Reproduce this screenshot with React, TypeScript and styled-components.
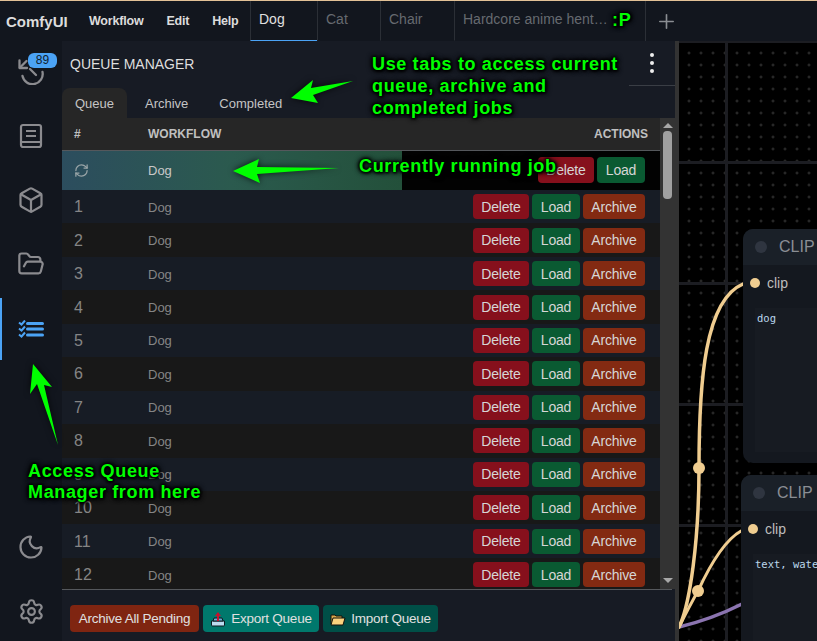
import React from 'react'
import styled, { createGlobalStyle } from 'styled-components'
import { Box, FolderOpen, Moon, Plus, RefreshCw, Settings } from 'lucide-react'

const GlobalStyle = createGlobalStyle`
  html, body {
    margin: 0;
    padding: 0;
    background: #000;
  }
  * {
    box-sizing: border-box;
  }
`

const Page = styled.div`
  position: relative;
  width: 817px;
  height: 641px;
  overflow: hidden;
  display: flex;
  flex-direction: column;
  border-top: 1px solid #e2c196;
  background: #12161e;
  font-family: 'Liberation Sans', Arial, sans-serif;
`
const TopBar = styled.div`
  height: 40px;
  flex: none;
  display: flex;
  align-items: stretch;
  background: #12161e;
  color: #e4e4e4;
`
const Logo = styled.div`
  width: 83px;
  padding-left: 6px;
  display: flex;
  align-items: center;
  font-size: 15px;
  font-weight: 700;
  color: #dcdcdc;
`
const Menu = styled.div`
  width: 167px;
  display: flex;
  align-items: center;
  padding-left: 6px;
  gap: 23px;
`
const MenuItem = styled.span`
  font-size: 12.5px;
  font-weight: 700;
  letter-spacing: -0.2px;
  color: #dcdcdc;
`
const Tab = styled.div<{ $w: number; $active?: boolean }>`
  width: ${(p) => p.$w}px;
  padding: 0 0 4px 8px;
  display: flex;
  align-items: center;
  font-size: 14px;
  color: ${(p) => (p.$active ? '#e0e0e0' : '#666a70')};
  border-left: 1px solid #2b2f36;
  border-bottom: 1px solid ${(p) => (p.$active ? '#4ba3f5' : 'transparent')};
`
const AddTab = styled.div`
  width: 42px;
  display: flex;
  align-items: center;
  justify-content: center;
  color: #8a8d92;
  border-left: 1px solid #2b2f36;
`
const Main = styled.div`
  flex: 1;
  min-height: 0;
  display: flex;
`
const Sidebar = styled.div`
  width: 62px;
  flex: none;
  display: flex;
  flex-direction: column;
  margin-bottom: -2px;
  margin-top: -1px;
  color: #8b8b8f;
`
const SideItem = styled.div<{ $active?: boolean }>`
  position: relative;
  height: ${(p) => (p.$active ? '62px' : '64px')};
  margin-top: ${(p) => (p.$active ? '2px' : '0')};
  flex: none;
  display: flex;
  align-items: center;
  justify-content: center;
  color: ${(p) => (p.$active ? '#4ba3f5' : 'inherit')};
  border-left: 2px solid ${(p) => (p.$active ? '#4ba3f5' : 'transparent')};
  padding-right: 2px;
`
const SideSpacer = styled.div`
  flex: 1;
`
const Badge = styled.span`
  position: absolute;
  left: 26px;
  top: 13px;
  width: 29px;
  height: 15px;
  border-radius: 6px;
  background: #4ba3f5;
  color: #10202e;
  font-size: 12px;
  line-height: 15px;
  text-align: center;
`
const Panel = styled.div`
  width: 613px;
  flex: none;
  display: flex;
  flex-direction: column;
  background: #171b24;
`
const PanelHead = styled.div`
  height: 45px;
  flex: none;
  display: flex;
  align-items: stretch;
  justify-content: space-between;
  padding-left: 8px;
`
const PanelTitle = styled.div`
  display: flex;
  align-items: center;
  font-size: 14px;
  color: #dedede;
`
const Kebab = styled.div`
  width: 46px;
  display: flex;
  flex-direction: column;
  align-items: center;
  justify-content: center;
  gap: 4px;
  border-bottom: 1px solid #3a3e45;
`
const Dot = styled.span`
  width: 4px;
  height: 4px;
  border-radius: 50%;
  background: #eee;
`
const TabStrip = styled.div`
  height: 32px;
  flex: none;
  display: flex;
  align-items: stretch;
  font-size: 13px;
`
const PanelTab = styled.div<{ $active?: boolean }>`
  width: ${(p) => (p.$active ? '65px' : 'auto')};
  padding: ${(p) => (p.$active ? '1px 0 0' : '1px 13px 0 18px')};
  margin-top: 2px;
  display: flex;
  align-items: center;
  justify-content: center;
  border-radius: 8px 8px 0 0;
  color: #c4c4c4;
  background: ${(p) => (p.$active ? '#262626' : 'transparent')};
`
const TableWrap = styled.div`
  flex: 1;
  min-height: 0;
  display: flex;
  background: #181818;
`
const Table = styled.div`
  flex: 1;
  min-width: 0;
  overflow: hidden;
`
const HeadRow = styled.div`
  height: 32px;
  display: grid;
  grid-template-columns: 74px 1fr auto;
  align-items: center;
  padding: 0 12px;
  background: #262626;
  color: #c0c0c0;
  font-size: 12px;
  font-weight: 700;
`
const RunningRow = styled.div`
  position: relative;
  height: 40px;
  display: grid;
  grid-template-columns: 74px 1fr auto;
  align-items: center;
  padding: 0 15px 1px 12px;
  background: #020202;
  border-top: 1px solid #55585c;
`
const Progress = styled.div`
  position: absolute;
  left: 0;
  top: 0;
  bottom: 0;
  background: linear-gradient(90deg, #2c4d5e, #2b5a4e 50%, #23503a);
`
const QueueRow = styled.div<{ $odd: boolean }>`
  height: 33.45px;
  display: grid;
  grid-template-columns: 74px 1fr auto;
  align-items: center;
  padding: 0 15px 0 12px;
  background: ${(p) => (p.$odd ? '#171c25' : '#181818')};
`
const RowNum = styled.div`
  padding-top: 1px;
  font-size: 16px;
  color: #858585;
`
const RowName = styled.div<{ $running?: boolean }>`
  position: relative;
  padding-top: 1px;
  font-size: 13px;
  color: ${(p) => (p.$running ? '#c8c8c8' : '#858585')};
`
const SpinCell = styled.div`
  position: relative;
  display: flex;
  color: #9aa5a8;
`
const Actions = styled.div`
  position: relative;
  display: flex;
  gap: 3px;
`
const ActionButton = styled.div<{ $bg: string; $w: number; $h?: number }>`
  width: ${(p) => p.$w}px;
  height: ${(p) => p.$h ?? 25}px;
  display: flex;
  align-items: center;
  justify-content: center;
  border-radius: 4px;
  background: ${(p) => p.$bg};
  color: #d6d6d6;
  font-size: 14px;
  letter-spacing: -0.2px;
`
const ScrollTrack = styled.div`
  width: 15px;
  flex: none;
  display: flex;
  flex-direction: column;
  align-items: center;
  background: #333;
`
const ArrowUp = styled.div`
  width: 0;
  height: 0;
  margin-top: 5px;
  border-left: 5px solid transparent;
  border-right: 5px solid transparent;
  border-bottom: 5px solid #a8a8a8;
`
const Thumb = styled.div`
  width: 9px;
  height: 68px;
  margin-top: 3px;
  border-radius: 4px;
  background: #a0a0a0;
`
const ArrowDown = styled.div`
  width: 0;
  height: 0;
  margin-top: auto;
  margin-bottom: 6px;
  border-left: 5px solid transparent;
  border-right: 5px solid transparent;
  border-top: 5px solid #a8a8a8;
`
const Footer = styled.div`
  height: 52px;
  flex: none;
  display: flex;
  align-items: flex-start;
  gap: 4px;
  padding: 15px 0 0 8px;
  border-top: 1px solid #55585c;
  margin-right: 3px;
`
const FooterButton = styled.div<{ $bg: string; $w: number }>`
  width: ${(p) => p.$w}px;
  height: 27px;
  display: flex;
  align-items: center;
  justify-content: center;
  gap: 5px;
  border-radius: 4px;
  background: ${(p) => p.$bg};
  color: #e0e0e0;
  font-size: 13.5px;
  letter-spacing: -0.25px;
`
const Splitter = styled.div`
  width: 4px;
  flex: none;
  background: #333;
`
const Canvas = styled.div`
  position: relative;
  flex: 1;
  background: #000;
  overflow: hidden;
`
const CanvasArt = styled.svg`
  position: absolute;
  left: 0;
  top: 0;
  width: 138px;
  height: 600px;
`
const Node = styled.div<{ $x: number; $y: number; $h: number }>`
  position: absolute;
  left: ${(p) => p.$x}px;
  top: ${(p) => p.$y}px;
  width: 200px;
  height: ${(p) => p.$h}px;
  border-radius: 10px;
  background: #14181f;
`
const NodeHead = styled.div`
  height: 36px;
  display: flex;
  align-items: center;
  gap: 12px;
  padding-left: 12px;
  border-radius: 10px 10px 0 0;
  background: #1a2028;
  color: #8a8e94;
  font-size: 16px;
`
const NodeLed = styled.span`
  width: 12px;
  height: 12px;
  border-radius: 50%;
  background: #2f3540;
`
const NodePort = styled.div`
  height: 36px;
  display: flex;
  align-items: center;
  gap: 7px;
  padding-left: 7px;
  color: #bdbdbd;
  font-size: 14px;
`
const PortDot = styled.span`
  width: 10px;
  height: 10px;
  border-radius: 50%;
  background: #f0cd90;
`
const NodeText = styled.div<{ $h: number }>`
  height: ${(p) => p.$h}px;
  margin: 7px 0 0 12px;
  padding: 4px 2px;
  background: #171b22;
  color: #bcd8ec;
  font-family: 'DejaVu Sans Mono', monospace;
  font-size: 10.5px;
`
const Overlay = styled.svg`
  position: absolute;
  left: 0;
  top: 0;
  width: 817px;
  height: 641px;
  pointer-events: none;
  filter: drop-shadow(0 0 3px rgba(0, 0, 0, 0.8));
`
const Note = styled.div<{ $x: number; $y: number; $lh?: number }>`
  position: absolute;
  left: ${(p) => p.$x}px;
  top: ${(p) => p.$y}px;
  font-size: 18px;
  font-weight: 700;
  line-height: ${(p) => p.$lh ?? 22}px;
  letter-spacing: 0.65px;
  white-space: pre;
  color: #00ff00;
  text-shadow: 0 0 2px #000, 0 0 3px #000, 0 0 4px #000, 0 0 5px #000, 0 0 6px #000, 1px 1px 3px #000;
`

const rows = Array.from({ length: 12 }, (_, i) => i + 1)

const HistoryIcon = () => (
  <svg width="26" height="26" viewBox="0 0 26 26" fill="none" stroke="currentColor" strokeWidth="2.3" strokeLinecap="round">
    <path d="M1.500 1.500V9H9" strokeLinejoin="round" />
    <path d="M2 8.500 8.500 2" />
    <path d="M4.500 17A10 10 0 0 0 24.500 13" />
    <path d="M12 10l6 6" />
  </svg>
)
const BookIcon = () => (
  <svg width="24" height="26" viewBox="0 0 24 26" fill="none" stroke="currentColor" strokeWidth="2.2">
    <rect x="2" y="2" width="20" height="22" rx="2" />
    <path d="M2 19h20M7 8h10M7 13h10" />
  </svg>
)
const QueueIcon = () => (
  <svg width="26" height="18" viewBox="0 0 26 18" fill="none" stroke="currentColor">
    <path d="M1 2.500l2.500 2L7 .5M1 8.500l2.500 2 3.500-4M1 14.500l2.500 2 3.500-4" strokeWidth="2" />
    <path d="M9.500 3.500h15M9.500 9h15M9.500 15h15" strokeWidth="3" strokeLinecap="round" />
  </svg>
)
const ExportIcon = () => (
  <svg width="16" height="16" viewBox="0 0 16 16">
    <path d="M1.500 10h13v4a1 1 0 0 1-1 1h-11a1 1 0 0 1-1-1z" fill="#bcdcf0" stroke="#0c1a20" />
    <path d="M3 10l1-3h8l1 3z" fill="#6aa8d0" stroke="#0c1a20" />
    <path d="M8 10V4" stroke="#c8102e" strokeWidth="2" />
    <path d="M5 5l3-4 3 4z" fill="#c8102e" />
  </svg>
)
const FolderIcon = () => (
  <svg width="16" height="14" viewBox="0 0 16 14">
    <path d="M1 12V3h4l1 1h6v2" fill="#d9a94e" stroke="#14120a" />
    <path d="M3 6h12l-2 7H1z" fill="#fbd27e" stroke="#14120a" />
  </svg>
)

export default function App() {
  return (
    <Page>
      <GlobalStyle />
      <TopBar>
        <Logo>ComfyUI</Logo>
        <Menu>
          <MenuItem>Workflow</MenuItem>
          <MenuItem>Edit</MenuItem>
          <MenuItem>Help</MenuItem>
        </Menu>
        <Tab $w={67} $active>Dog</Tab>
        <Tab $w={63}>Cat</Tab>
        <Tab $w={74}>Chair</Tab>
        <Tab $w={191}>Hardcore anime hent…</Tab>
        <AddTab>
          <Plus size={23} strokeWidth={1.7} />
        </AddTab>
      </TopBar>
      <Main>
        <Sidebar>
          <SideItem>
            <HistoryIcon />
            <Badge>89</Badge>
          </SideItem>
          <SideItem><BookIcon /></SideItem>
          <SideItem><Box size={28} strokeWidth={1.9} /></SideItem>
          <SideItem><FolderOpen size={28} strokeWidth={1.9} /></SideItem>
          <SideItem $active><QueueIcon /></SideItem>
          <SideSpacer />
          <SideItem><Moon size={28} strokeWidth={1.9} /></SideItem>
          <SideItem><Settings size={27} strokeWidth={1.9} /></SideItem>
        </Sidebar>
        <Panel>
          <PanelHead>
            <PanelTitle>QUEUE MANAGER</PanelTitle>
            <Kebab>
              <Dot />
              <Dot />
              <Dot />
            </Kebab>
          </PanelHead>
          <TabStrip>
            <PanelTab $active>Queue</PanelTab>
            <PanelTab>Archive</PanelTab>
            <PanelTab>Completed</PanelTab>
          </TabStrip>
          <TableWrap>
            <Table>
              <HeadRow>
                <span>#</span>
                <span>WORKFLOW</span>
                <span>ACTIONS</span>
              </HeadRow>
              <RunningRow>
                <Progress style={{ width: `${(340 / 598) * 100}%` }} />
                <SpinCell><RefreshCw size={15} /></SpinCell>
                <RowName $running>Dog</RowName>
                <Actions>
                  <ActionButton $bg="#86101c" $w={56} $h={26}>Delete</ActionButton>
                  <ActionButton $bg="#0a5a32" $w={48} $h={26}>Load</ActionButton>
                </Actions>
              </RunningRow>
              {rows.map((n) => (
                <QueueRow key={n} $odd={n % 2 === 1}>
                  <RowNum>{n}</RowNum>
                  <RowName>Dog</RowName>
                  <Actions>
                    <ActionButton $bg="#86101c" $w={56}>Delete</ActionButton>
                    <ActionButton $bg="#0a5a32" $w={48}>Load</ActionButton>
                    <ActionButton $bg="#832a12" $w={62}>Archive</ActionButton>
                  </Actions>
                </QueueRow>
              ))}
            </Table>
            <ScrollTrack>
              <ArrowUp />
              <Thumb />
              <ArrowDown />
            </ScrollTrack>
          </TableWrap>
          <Footer>
            <FooterButton $bg="#7f2511" $w={129}>Archive All Pending</FooterButton>
            <FooterButton $bg="#00786c" $w={116}><ExportIcon />Export Queue</FooterButton>
            <FooterButton $bg="#004f47" $w={115}><FolderIcon />Import Queue</FooterButton>
          </Footer>
        </Panel>
        <Splitter />
        <Canvas>
          <CanvasArt viewBox="0 0 138 600">
            <defs>
              <pattern id="dots" width="12" height="12" patternUnits="userSpaceOnUse">
                <path d="M10 -1.500V1.500M8.500 0H11.500M10 10.500V13.500M8.500 12H11.500" stroke="#333" strokeWidth="1" />
              </pattern>
              <pattern id="lines" width="121" height="121" patternUnits="userSpaceOnUse" x="46" y="-1">
                <path d="M0 0V121M0 0H121" stroke="#1c1d22" strokeWidth="6" />
              </pattern>
            </defs>
            <rect width="138" height="600" fill="url(#dots)" />
            <rect width="138" height="600" fill="url(#lines)" />
            <g transform="translate(-679 -41)" fill="none" strokeLinecap="round">
              <path d="M679 627C700 622 720 615 742 604" stroke="#8b74b0" strokeWidth="3.500" />
              <path d="M679 627C690 605 699 540 699 468C699 380 705 300 743 284" stroke="#f0cd90" strokeWidth="3.500" />
              <path d="M679 627C685 615 690 605 698 591C710 565 725 540 741 531" stroke="#f0cd90" strokeWidth="3" />
              <circle cx="699" cy="468" r="6" fill="#f0cd90" />
              <circle cx="698" cy="591" r="6" fill="#f0cd90" />
            </g>
          </CanvasArt>
          <Node $x={64} $y={188} $h={234}>
            <NodeHead><NodeLed />CLIP</NodeHead>
            <NodePort><PortDot />clip</NodePort>
            <NodeText $h={144}>dog</NodeText>
          </Node>
          <Node $x={62} $y={434} $h={200}>
            <NodeHead><NodeLed />CLIP</NodeHead>
            <NodePort><PortDot />clip</NodePort>
            <NodeText $h={120}>text, watermark</NodeText>
          </Node>
        </Canvas>
      </Main>
      <Overlay viewBox="0 0 817 641">
        <polygon points="291,97 313,79 311,87 353,80 313,94 318,102" fill="#00ff00" />
        <polygon points="233,170 259,158 257,166 339,167 257,173 260,182" fill="#00ff00" />
        <polygon points="33,363 52,386 44,384 58,444 37,383 30,393" fill="#00ff00" />
      </Overlay>
      <Note $x={372} $y={52}>{'Use tabs to access current\nqueue, archive and\ncompleted jobs'}</Note>
      <Note $x={359} $y={154}>Currently running job</Note>
      <Note $x={28} $y={460} $lh={21}>{'Access Queue\nManager from here'}</Note>
      <Note $x={612} $y={8}>:P</Note>
    </Page>
  )
}
